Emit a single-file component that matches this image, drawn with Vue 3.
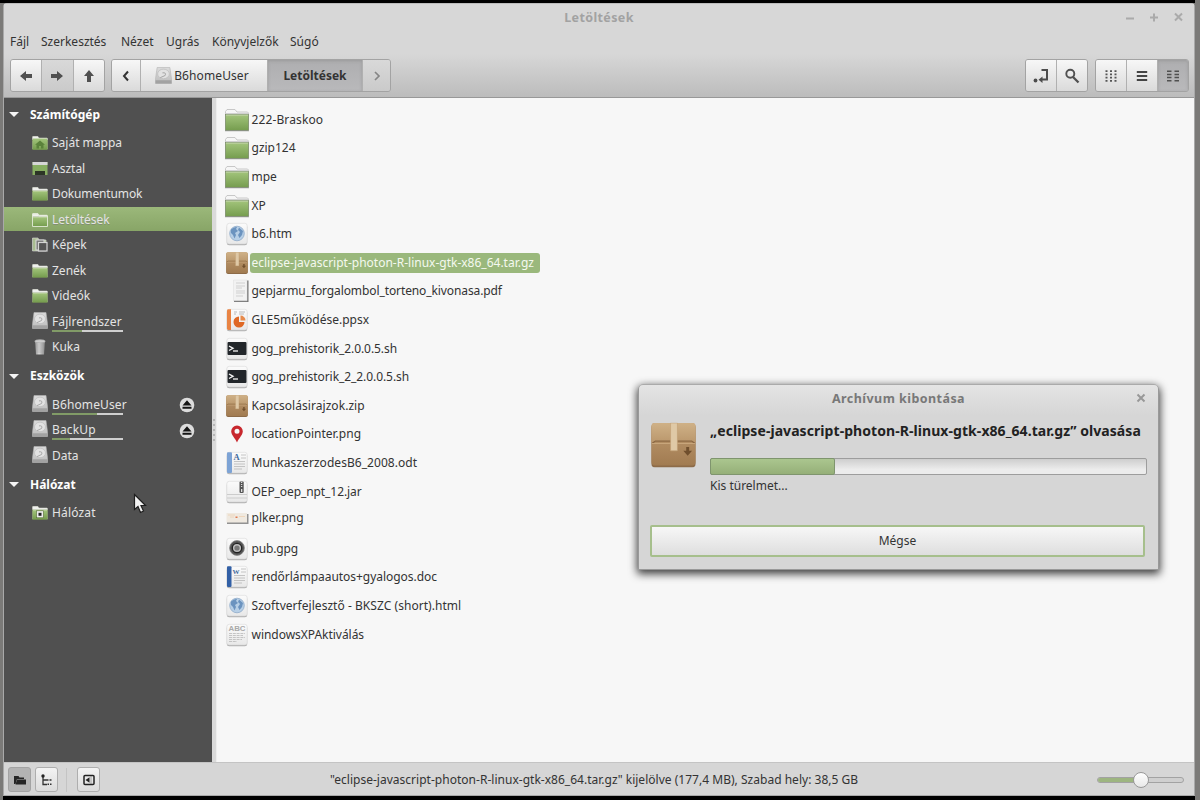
<script setup>
const menus = [
  { t: 'Fájl', w: 19 }, { t: 'Szerkesztés', w: 68 }, { t: 'Nézet', w: 33 },
  { t: 'Ugrás', w: 34 }, { t: 'Könyvjelzők', w: 66 }, { t: 'Súgó', w: 28 },
]
const groups = [
  { title: 'Számítógép', items: [
    { t: 'Saját mappa', i: 'home' }, { t: 'Asztal', i: 'desktop' }, { t: 'Dokumentumok', i: 'folder', ls: -0.13 },
    { t: 'Letöltések', i: 'folder', sel: true }, { t: 'Képek', i: 'pictures' }, { t: 'Zenék', i: 'folder' },
    { t: 'Videók', i: 'folder' }, { t: 'Fájlrendszer', i: 'disk', use: 42, ls: 0.1 }, { t: 'Kuka', i: 'trash' },
  ] },
  { title: 'Eszközök', items: [
    { t: 'B6homeUser', i: 'disk', use: 64, eject: true, ls: 0.12 }, { t: 'BackUp', i: 'disk', use: 26, eject: true, ls: 0.15 },
    { t: 'Data', i: 'disk' },
  ] },
  { title: 'Hálózat', items: [{ t: 'Hálózat', i: 'network', ls: 0.15 }] },
]
const files = [
  { t: '222-Braskoo', i: 'folder', ls: 0.12 }, { t: 'gzip124', i: 'folder' }, { t: 'mpe', i: 'folder' }, { t: 'XP', i: 'folder' },
  { t: 'b6.htm', i: 'globe' }, { t: 'eclipse-javascript-photon-R-linux-gtk-x86_64.tar.gz', i: 'package', sel: true },
  { t: 'gepjarmu_forgalombol_torteno_kivonasa.pdf', i: 'pdf', ls: -0.1 }, { t: 'GLE5működése.ppsx', i: 'ppsx' },
  { t: 'gog_prehistorik_2.0.0.5.sh', i: 'shell', ls: -0.07 }, { t: 'gog_prehistorik_2_2.0.0.5.sh', i: 'shell', ls: -0.07 },
  { t: 'Kapcsolásirajzok.zip', i: 'package', ls: 0.05 }, { t: 'locationPointer.png', i: 'pin' },
  { t: 'MunkaszerzodesB6_2008.odt', i: 'odt', ls: 0.05 }, { t: 'OEP_oep_npt_12.jar', i: 'jar', ls: -0.08 },
  { t: 'plker.png', i: 'thumb', short: true }, { t: 'pub.gpg', i: 'gpg', ls: -0.15 },
  { t: 'rendőrlámpaautos+gyalogos.doc', i: 'doc', ls: -0.04 }, { t: 'Szoftverfejlesztő - BKSZC (short).html', i: 'globe', ls: 0.04 },
  { t: 'windowsXPAktiválás', i: 'text', ls: -0.03 },
]
const spacing = (o) => ({ letterSpacing: (o.ls || 0) + 'px' })
</script>

<template>
  <div class="screen">
    <svg class="defs" width="0" height="0">
      <defs>
        <linearGradient id="green" x1="0" y1="0" x2="0" y2="1"><stop offset="0" stop-color="#a3c57c" /><stop offset="1" stop-color="#759c4e" /></linearGradient>
        <linearGradient id="silver" x1="0" y1="0" x2="0" y2="1"><stop offset="0" stop-color="#dcdcdc" /><stop offset="1" stop-color="#bcbcbc" /></linearGradient>
        <linearGradient id="paper" x1="0" y1="0" x2="0" y2="1"><stop offset="0" stop-color="#fbfbfb" /><stop offset="1" stop-color="#e8e8e8" /></linearGradient>
        <linearGradient id="kraftTop" x1="0" y1="0" x2="0" y2="1"><stop offset="0" stop-color="#cfb187" /><stop offset="1" stop-color="#bb986d" /></linearGradient>
        <linearGradient id="kraft" x1="0" y1="0" x2="0" y2="1"><stop offset="0" stop-color="#bf9b70" /><stop offset="1" stop-color="#a17b51" /></linearGradient>
        <linearGradient id="bin" x1="0" y1="0" x2="1" y2="0"><stop offset="0" stop-color="#8d8d8d" /><stop offset=".4" stop-color="#dadada" /><stop offset="1" stop-color="#858585" /></linearGradient>
      </defs>
      <symbol id="page" viewBox="0 0 22 24">
        <rect x=".8" y="2.8" width="20.400" height="20.400" rx="2.500" fill="#b2b2b2" />
        <rect x=".8" y="1.3" width="20.400" height="20.600" rx="2.500" fill="url(#paper)" stroke="#d9d9d9" stroke-width=".6" />
      </symbol>
      <symbol id="diskIcon" viewBox="0 0 16 16">
        <path d="M2 .5H14L15.500 11V15.500H.5V11Z" fill="url(#silver)" stroke="#b5b5b5" stroke-width=".6" />
        <path d="M.5 12.500H15.500V15.500H.5Z" fill="#a2a2a2" />
        <ellipse cx="8" cy="6.500" rx="5.500" ry="4.500" fill="#e2e2e2" stroke="#bdbdbd" stroke-width=".7" />
        <path d="M7 5.500Q11 5 9.500 8L5 10" fill="none" stroke="#a2a2a2" stroke-width=".9" />
      </symbol>
      <symbol id="smallFolder" viewBox="0 0 16 14">
        <path d="M.5 13V1Q.5.3 1.200.3H5.800L7 2H15Q15.500 2 15.500 3V13Z" fill="#eff0ed" stroke="#d6dacf" stroke-width=".5" />
        <rect x=".7" y="4" width="14.600" height="9.400" fill="url(#green)" stroke="#66843e" stroke-width=".5" />
        <path d="M1 4.400H15" stroke="#c3d8a4" stroke-width=".8" />
      </symbol>
      <symbol id="box" viewBox="0 0 46 46">
        <rect x=".5" y="1.500" width="45" height="44.500" rx="3.500" fill="#8d6b48" />
        <rect x=".5" y=".5" width="45" height="43.500" rx="3.500" fill="url(#kraft)" />
        <path d="M.5 20V4Q.5.5 4 .5H42Q45.500.5 45.500 4V20Z" fill="url(#kraftTop)" />
        <path d="M1.500 21L4.500 19H41.500L44.500 21" fill="none" stroke="#8a6742" stroke-width="1.300" />
        <path d="M1 21.500H45" stroke="#cfae84" stroke-width=".8" />
        <path d="M20 .5H27V29H20Z" fill="#dfc9a6" stroke="#c09d72" stroke-width=".6" />
        <path d="M36 25H39V29H42L37.500 34L33 29H36Z" fill="#704f2d" />
      </symbol>
    </svg>

    <div class="window">
      <header class="head">
        <div class="titlebar">
          <span>Letöltések</span>
          <svg class="winctl" width="60" height="12" viewBox="0 0 60 12" fill="none" stroke="#aaa" stroke-width="2">
            <path d="M1 7.500H9M25 6.500H33M29 2.500V10.500" /><path d="M50 2.500L57 9.500M57 2.500L50 9.500" />
          </svg>
        </div>
        <nav class="menu"><span v-for="m in menus" :key="m.t" :style="{ width: m.w + 'px' }">{{ m.t }}</span></nav>
        <div class="toolbar">
          <div class="group nav">
            <button><svg width="14" height="14" viewBox="0 0 14 14"><path d="M1 7L7 2V5H13V9H7V12Z" fill="#505050" /></svg></button>
            <button class="dim"><svg width="14" height="14" viewBox="0 0 14 14"><path d="M13 7L7 2V5H1V9H7V12Z" fill="#505050" /></svg></button>
            <button><svg width="14" height="14" viewBox="0 0 14 14"><path d="M7 1L12 7H9V13H5V7H2Z" fill="#505050" /></svg></button>
          </div>
          <div class="group path">
            <button class="p1"><svg width="8" height="12" viewBox="0 0 8 12"><path d="M6 1.500L2 6L6 10.500" fill="none" stroke="#333" stroke-width="2" /></svg></button>
            <button class="p2"><svg width="17" height="17"><use href="#diskIcon" /></svg><span>B6homeUser</span></button>
            <button class="p3 on">Letöltések</button>
            <button class="p4 dim"><svg width="8" height="12" viewBox="0 0 8 12"><path d="M2 2L6 6L2 10" fill="none" stroke="#858585" stroke-width="1.700" /></svg></button>
          </div>
          <div class="group right">
            <button><svg width="16" height="16" viewBox="0 0 16 16"><circle cx="2.500" cy="12.500" r="1.900" fill="#4d4d4d" /><path d="M8.500 2H14V11.500H8" fill="none" stroke="#4d4d4d" stroke-width="2" /><path d="M5.500 11.800L9.500 8.500V15Z" fill="#4d4d4d" /></svg></button>
            <button><svg width="16" height="16" viewBox="0 0 16 16" fill="none" stroke="#505050"><circle cx="6.300" cy="5.700" r="4" stroke-width="1.900" /><path d="M9 9L14.500 14.500" stroke-width="2.300" /></svg></button>
          </div>
          <div class="group views">
            <button><svg width="12" height="12" viewBox="0 0 12 12" stroke="#555" stroke-width="1.800" stroke-dasharray="2 2.500"><path d="M.5 1.200H12M.5 4.400H12M.5 7.600H12M.5 10.800H12" /></svg></button>
            <button><svg width="12" height="12" viewBox="0 0 12 12"><path d="M.8 2H11.200M.8 6H11.200M.8 10H11.200" stroke="#444" stroke-width="2" /></svg></button>
            <button class="on"><svg width="14" height="12" viewBox="0 0 14 12"><path d="M1 1.200H5.500M8.500 1.200H13M1 4.400H5.500M8.500 4.400H13M1 7.600H5.500M8.500 7.600H13M1 10.800H5.500M8.500 10.800H13" stroke="#505050" stroke-width="1.500" /></svg></button>
          </div>
        </div>
      </header>

      <div class="body">
        <aside class="side">
          <template v-for="g in groups" :key="g.title">
            <div class="gtitle"><i></i><b>{{ g.title }}</b></div>
            <div v-for="p in g.items" :key="p.t" class="place" :class="{ sel: p.sel }">
              <svg v-if="p.i === 'disk'" width="16" height="17" viewBox="0 0 16 16" preserveAspectRatio="none" class="up"><use href="#diskIcon" width="16" height="16" /></svg>
              <svg v-else width="16" height="16" viewBox="0 0 16 16">
                <template v-if="p.i === 'folder'"><use href="#smallFolder" y="1" width="16" height="14" /><path v-if="p.sel" d="M.5 14.500V2H6L7 4H15.500V14.500Z" fill="none" stroke="#e3ecd8" stroke-width=".9" /></template>
                <template v-else-if="p.i === 'home'">
                  <use href="#smallFolder" y="1" width="16" height="14" /><rect x="1" y="3.500" width="14" height="11" fill="url(#green)" />
                  <path d="M8 5.500L13 9.800H11.500V13.500H9V11H7V13.500H4.500V9.800H3Z" fill="#5b823b" />
                </template>
                <template v-else-if="p.i === 'desktop'">
                  <rect x=".5" y="1" width="15" height="13" fill="#87ae61" /><rect x=".5" y="1" width="15" height="3" fill="#d6d6d6" /><rect x="3" y="10" width="10" height="4" fill="#2c3526" />
                </template>
                <template v-else-if="p.i === 'pictures'">
                  <path d="M.5 14V1H6L7 3H14V14Z" fill="#a8bc91" stroke="#ddd" stroke-width=".6" />
                  <rect x="4" y="3" width="8" height="10" fill="#777" stroke="#ddd" /><rect x="6.500" y="5.500" width="8.500" height="8.500" fill="#555" stroke="#d4d4d4" stroke-width="1.200" />
                </template>
                <template v-else-if="p.i === 'trash'">
                  <path d="M3 2H13L12 15.500H4Z" fill="url(#bin)" /><ellipse cx="8" cy="2.300" rx="5.300" ry="1.700" fill="#ccc" stroke="#999" stroke-width=".6" />
                  <path d="M6 5V14M8 5V14M10 5V14" stroke="#a6a6a6" stroke-width=".6" />
                </template>
                <template v-else>
                  <use href="#smallFolder" y="1" width="16" height="14" /><rect x="4.500" y="5.800" width="7" height="7" fill="#eee" stroke="#50692f" stroke-width=".6" /><rect x="6.500" y="7.800" width="3" height="3" fill="#222" />
                </template>
              </svg>
              <span class="pname" :style="spacing(p)">{{ p.t }}<em v-if="p.use"><u :style="{ width: p.use + '%' }"></u></em></span>
              <svg v-if="p.eject" class="eject" width="16" height="16" viewBox="0 0 16 16"><circle cx="8" cy="8" r="7.300" fill="#dcdcdc" /><path d="M8 3.300L12.500 8.500H3.500ZM3.500 9.700H12.500V11.700H3.500Z" fill="#151515" /></svg>
            </div>
          </template>
        </aside>
        <div class="grip"><i v-for="n in 5" :key="n"></i></div>
        <main class="files">
          <div v-for="f in files" :key="f.t" class="file" :class="{ short: f.short }">
            <svg width="24" height="24" viewBox="0 0 24 24">
              <g v-if="f.i === 'folder'">
                <path d="M.5 22V3.500L2 1.500H10L12 4H22.500L23.500 5V22Z" fill="#f6f6f6" stroke="#bcbcbc" stroke-width=".8" />
                <path d="M.5 5.500H23.500" stroke="#d0d0d0" />
                <rect x=".5" y="6.500" width="23" height="16" fill="url(#green)" stroke="#7a8c68" stroke-width=".7" /><path d="M1 7.200H23" stroke="#bed3a4" /><path d="M0 22.800H24" stroke="#8b8b8b" stroke-width=".7" />
              </g>
              <g v-else-if="f.i === 'globe'">
                <use href="#page" x="1" width="22" height="24" /><circle cx="12" cy="11.500" r="7.300" fill="#b7cfe6" stroke="#8fabc9" stroke-width=".8" />
                <path d="M6 7.500Q9 4.500 12 5L11 7L13 9L10 11L11 13L9.500 16.500L8 13L6 11ZM14 5.500L18 9L17 13L14.500 16L13 13L15 10L13 8Z" fill="#6b93bf" />
              </g>
              <use v-else-if="f.i === 'package'" href="#box" x="1" y="1" width="22" height="22" />
              <g v-else-if="f.i === 'pdf'">
                <path d="M9 1.500H23.500V23H9Z" fill="#777" /><path d="M8.500 1H22V21.700H8.500Z" fill="#f2f2f2" stroke="#ddd" stroke-width=".5" />
                <path d="M11 4H20M11 7H20M11 9H17M11 12H20M11 14H20M11 17H18" stroke="#c8c8c8" stroke-width=".8" />
              </g>
              <g v-else-if="f.i === 'ppsx'">
                <use href="#page" x="1" width="22" height="24" /><path d="M3.500 1.300H6V21.900H3.500Q2 21.900 2 20.500V2.500Q2 1.300 3.500 1.300Z" fill="#e98444" />
                <path d="M9 4H12M14 4H20M9 6H11M14 6H19" stroke="#aaa" stroke-width=".8" /><path d="M14 8.500A5.500 5.500 0 1 0 19.500 14H14Z" fill="#df6825" /><path d="M15.500 7.500A5 5 0 0 1 20.500 12.500H15.500Z" fill="#e78a4b" />
              </g>
              <g v-else-if="f.i === 'shell'">
                <use href="#page" x="1" width="22" height="24" /><rect x="2.500" y="5" width="19" height="13" rx="1" fill="#22262a" /><path d="M4 9L8 11.300L4 13.500" fill="none" stroke="#f5f5f5" stroke-width="1.400" /><path d="M8 14H13" stroke="#f5f5f5" stroke-width="1.300" />
              </g>
              <path v-else-if="f.i === 'pin'" fill-rule="evenodd" d="M12 3.500A5.800 5.800 0 0 0 6.200 9.300C6.200 13 10 16 12 20.500C14 16 17.800 13 17.800 9.300A5.800 5.800 0 0 0 12 3.500ZM12 6.800A2.500 2.500 0 1 1 12 11.800A2.500 2.500 0 0 1 12 6.800Z" fill="#c8282e" />
              <g v-else-if="f.i === 'odt' || f.i === 'doc'">
                <use href="#page" x="1" width="22" height="24" /><rect x="2" y="1.300" :width="f.i === 'odt' ? 5 : 4.500" height="20.600" rx="1" :fill="f.i === 'odt' ? '#7da3d5' : '#3260a6'" />
                <text :x="f.i === 'odt' ? 8.500 : 7.500" y="8.500" :font-size="f.i === 'odt' ? 8.500 : 7" font-family="Liberation Serif, serif" font-weight="bold" fill="#426a9d">{{ f.i === 'odt' ? 'A' : 'W' }}</text>
                <path d="M16 4H21M16 7H21M9 10.500H20M9 13H20M9 15.500H20M9 18H17" stroke="#b7b7b7" stroke-width=".8" />
              </g>
              <g v-else-if="f.i === 'jar'">
                <use href="#page" x="1" width="22" height="24" /><path d="M2 14.500H22M2 18H22" stroke="#ccc" /><rect x="14.500" y="1.500" width="4.200" height="11.500" rx="1" fill="#555" /><path d="M16.600 2V8" stroke="#ddd" stroke-width="1.300" stroke-dasharray="1 1" /><rect x="16" y="9" width="1.300" height="3" fill="#ddd" />
              </g>
              <g v-else-if="f.i === 'thumb'">
                <path d="M2 8H23.500V18H2Z" fill="#929292" /><path d="M1.500 7H22V16.500H1.500Z" fill="#efe9e0" /><path d="M3 9H10M5 11H9M14 10.500H20" stroke="#eed6bc" /><path d="M10.500 10.500H12.500V12H10.500Z" fill="#e0784e" />
              </g>
              <g v-else-if="f.i === 'gpg'">
                <use href="#page" x="1" width="22" height="24" /><circle cx="12" cy="11" r="7.400" fill="#545454" stroke="#888" stroke-width=".8" /><circle cx="12" cy="11" r="4.700" fill="#bdbdbd" stroke="#222" stroke-width="1.300" /><circle cx="12" cy="11" r="2.600" fill="#777" />
              </g>
              <g v-else>
                <use href="#page" x="1" width="22" height="24" /><text x="3.500" y="7.500" textLength="17" lengthAdjust="spacingAndGlyphs" font-size="6.800" font-family="Liberation Sans, sans-serif" font-weight="bold" fill="#aaa">ABC</text>
                <path d="M4 10.500H20M4 12.500H18M4 14.500H20M4 16.500H17M4 18.500H12" stroke="#bebebe" stroke-width=".9" stroke-dasharray="3 .8" />
              </g>
            </svg>
            <span class="fname" :class="{ sel: f.sel }" :style="spacing(f)">{{ f.t }}</span>
          </div>
        </main>
      </div>

      <footer class="status">
        <button class="on"><svg width="14" height="12" viewBox="0 0 14 12"><path d="M1 10V2H5.500L6.500 3.500H11V5H4L2.500 10Z" fill="#252525" /><path d="M4 5.500H13V10.500H2.500Z" fill="#252525" /></svg></button>
        <button><svg width="12" height="12" viewBox="0 0 12 12"><path d="M2 2V10.500H6M2 6H6" fill="none" stroke="#333" stroke-width="1.300" /><circle cx="2" cy="2" r="1.700" fill="#222" /><path d="M6 6H7.500M8.500 6H10.500M6.500 10.300H8M9 10.300H10.500" stroke="#333" stroke-width="1.500" /></svg></button>
        <i class="vsep"></i>
        <button><svg width="12" height="12" viewBox="0 0 12 12"><rect x="1" y="1.500" width="10" height="9" rx="1" fill="none" stroke="#222" stroke-width="1.500" /><path d="M6.500 3.300V8.700L2.500 6Z" fill="#222" /><path d="M8 2V10" stroke="#777" stroke-width=".6" /></svg></button>
        <span class="info">"eclipse-javascript-photon-R-linux-gtk-x86_64.tar.gz" kijelölve (177,4 MB), Szabad hely: 38,5 GB</span>
        <div class="slider"><b></b><i></i></div>
      </footer>
    </div>

    <section class="dialog">
      <div class="dtitle"><span>Archívum kibontása</span><svg width="10" height="10" viewBox="0 0 10 10"><path d="M1.500 1.500L8.500 8.500M8.500 1.500L1.500 8.500" stroke="#989898" stroke-width="2" /></svg></div>
      <div class="dbody">
        <svg width="45" height="46" viewBox="0 0 46 46"><use href="#box" /></svg>
        <div class="dmain">
          <h1>„eclipse-javascript-photon-R-linux-gtk-x86_64.tar.gz” olvasása</h1>
          <div class="bar"><i></i></div>
          <p>Kis türelmet...</p>
        </div>
      </div>
      <button class="cancel">Mégse</button>
    </section>

    <svg class="cursor" width="14" height="22" viewBox="0 0 14 22"><path d="M1.500 1.500V16.500L5 13.500L7.500 19.500L10.500 18L8 12.500H12.500Z" fill="#f2f2f2" stroke="#1e1e1e" stroke-width="1.200" /></svg>
  </div>
</template>

<style>
html, body { margin: 0; overflow: hidden; background: #000; }
</style>

<style scoped>
* { box-sizing: border-box; }
.screen { width: 1200px; height: 800px; position: relative; padding: 3px 5px 4px 3px; border: 0; background: linear-gradient(#000, #000) 0 0 / 1195px 3px no-repeat, linear-gradient(#000, #000) 3px 796px / 1192px 4px no-repeat, #7b7a78; font: 12px/16px "Noto Sans", sans-serif; color: #333; overflow: hidden; }
.defs { position: absolute; }
.window { width: 1192px; height: 793px; display: flex; flex-direction: column; background: #d6d6d6; border: 1px solid #a9a9a9; border-top-color: #bcbcbc; border-radius: 4px 4px 0 0; }
.head { height: 94px; flex: none; background: linear-gradient(#d7d7d7 50px, #bcbcbc); border-bottom: 1px solid #989898; }
.titlebar { height: 28px; display: flex; align-items: center; justify-content: center; color: #a2a2a2; font-weight: bold; font-size: 12.500px; letter-spacing: .38px; position: relative; }
.winctl { position: absolute; right: 9px; top: 7px; }
.menu { height: 20px; margin-left: 6px; display: flex; gap: 12px; align-items: center; white-space: nowrap; }
.toolbar { display: flex; height: 33px; margin: 7px 5px 0 6px; }
button { font: inherit; color: inherit; border: 0; margin: 0; padding: 0; display: flex; align-items: center; justify-content: center; white-space: nowrap; }
.group { display: flex; height: 33px; border: 1px solid #a3a3a3; border-radius: 3px; overflow: hidden; }
.group button { background: linear-gradient(#f7f7f7, #dadada); border-left: 1px solid #b0b0b0; flex: 1; }
.group button:first-child { border-left: 0; }
.group button.dim { background: linear-gradient(#d9d9d9, #cacaca); }
.group button.on { background: linear-gradient(#aeaeb0, #b9b9bb); box-shadow: inset 0 1px 3px #8888; }
.nav { width: 95px; }
.path { width: 280px; margin-left: 6px; }
.group .p1 { flex: 0 0 28px; }
.group .p2 { flex: 0 0 127px; gap: 2px; padding-right: 4px; letter-spacing: .1px; }
.group .p3 { flex: 0 0 95px; font-weight: bold; }
.right { width: 63px; margin-left: auto; }
.views { width: 94px; margin-left: 7px; }
.body { flex: 1; display: flex; min-height: 0; }
.side { width: 208px; background: #505050; color: #e4e4e4; padding-top: .6px; }
.gtitle { height: 32px; display: flex; align-items: center; color: #fff; }
.gtitle i { border: 5px solid transparent; border-top: 5px solid #f5f5f5; border-bottom: 0; margin: 0 11px 0 5px; }
.place { height: 25.500px; display: flex; align-items: center; padding-left: 28px; gap: 4px; position: relative; }
.place.sel { background: linear-gradient(#9bb87a, #88a567) 0 0 / 100% 24px no-repeat; text-shadow: 0 1px #7778; }
.up { margin-top: -3px; }
.pname { position: relative; }
.pname em { position: absolute; left: 0; bottom: -2px; width: 71px; height: 2px; background: #cfcfcf; }
.pname u { display: block; height: 2px; background: #819b67; }
.eject { position: absolute; right: 17px; top: 5px; }
.grip { width: 5px; background: #dadada; border-right: 1px solid #eee; display: flex; flex-direction: column; gap: 3px; align-items: center; justify-content: center; }
.grip i { width: 2px; height: 2px; background: #aaa; border-radius: 1px; }
.files { flex: 1; background: #f7f7f7; padding: 7.600px 0 0 8px; }
.file { height: 28.600px; display: flex; align-items: center; }
.file.short { padding-bottom: 5px; }
.file svg { flex: none; }
.fname { padding: 1px 6px 1px 2px; margin-left: 0.500px; border-radius: 3px; height: 20px; line-height: 18px; white-space: nowrap; }
.fname.sel { background: #9ab87c; color: #f4f8ef; }
.status { height: 33px; flex: none; border-top: 1px solid #c4c4c4; display: flex; align-items: center; padding: 1px 10px 0 4px; position: relative; }
.status button { width: 23px; height: 25px; border: 1px solid #aeaeae; border-radius: 3px; background: linear-gradient(#f3f3f3, #dcdcdc); margin-right: 4px; }
.status button.on { background: #b3b3b3; border-color: #a3a3a3; }
.vsep { width: 1px; height: 24px; background: #c4c4c4; margin: 0 10px 0 4px; }
.info { position: absolute; left: 326px; top: 8.500px; white-space: nowrap; letter-spacing: .02px; }
.slider { margin-left: auto; width: 87px; height: 6px; border: 1px solid #a2a2a2; border-radius: 3px; background: #cfcfcf; position: relative; }
.slider b { display: block; width: 40px; height: 4px; background: #9db580; border-radius: 2px; }
.slider i { position: absolute; left: 35px; top: -6px; width: 16px; height: 16px; border: 1px solid #999; border-radius: 50%; background: linear-gradient(#fff, #e8e8e8); }
.dialog { position: absolute; left: 638px; top: 384px; width: 521px; height: 186px; border: 1px solid #999; border-top-color: #aaa; border-radius: 5px 5px 1px 1px; background: linear-gradient(#e4e4e4, #d6d6d6 30px); box-shadow: 0 3px 9px 1px rgba(0,0,0,.75); }
.dtitle { height: 28px; display: flex; align-items: center; justify-content: center; font-weight: bold; font-size: 12.500px; letter-spacing: .45px; color: #787878; position: relative; }
.dtitle svg { position: absolute; right: 12px; top: 8px; }
.dbody { display: flex; padding: 10px 11px 0 12px; gap: 14px; }
.dbody > svg { margin-top: -1px; }
.dmain { flex: 1; }
h1 { margin: -3px 0 16px; font-size: 14px; line-height: 22px; font-weight: bold; color: #222; white-space: nowrap; letter-spacing: .065px; }
.bar { height: 17px; border: 1px solid #9d9d9d; border-radius: 2px; background: linear-gradient(#cecece, #ececec 70%); }
.bar i { display: block; width: 125px; height: 17px; margin: -1px; border: 1px solid #7f956e; border-radius: 2px; background: linear-gradient(#abc68f, #95af78); }
p { margin: 3px 0 0; }
.cancel { width: 495px; height: 32px; position: absolute; left: 11px; top: 140px; border: 2px solid #a6bf8c; border-radius: 2px; background: linear-gradient(#f7f7f7, #dedede); }
.cursor { position: absolute; left: 133px; top: 493px; }
</style>
